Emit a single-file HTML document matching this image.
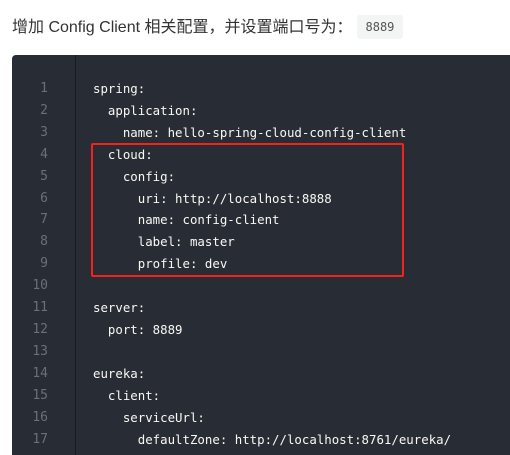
<!DOCTYPE html>
<html><head><meta charset="utf-8"><style>
body{margin:0;width:510px;height:450px;overflow:hidden;background:#fff;position:relative;font-family:"Liberation Sans","Noto Sans CJK SC",sans-serif}
.t{position:absolute;left:12px;top:15px;font-size:16px;color:#333;line-height:22px;white-space:nowrap}
.c{display:inline-block;background:#f3f4f4;border-radius:3px;font-family:"DejaVu Sans Mono",monospace;font-size:12px;color:#555;padding:2px 9px;margin-left:4px;line-height:20px;vertical-align:1px}
.b{position:absolute;left:12px;top:55px;width:510px;height:400px;background:#282c34;border-radius:4px 0 0 0}
.g{position:absolute;left:75px;top:55px;width:1px;height:400px;background:#17191d}
.n,.k{position:absolute;top:78px;font-family:"DejaVu Sans Mono",monospace;font-size:12.4px;line-height:21.9px;white-space:pre}
.n{left:20px;width:28px;text-align:right;color:#6b7078;font-size:13px}
.k{left:93px;color:#f8f8f4}
.r{position:absolute;left:91px;top:143px;width:309px;height:130px;border:2px solid #f2231c;border-radius:2px}
</style></head><body>
<div class="t">增加 Config Client 相关配置，并设置端口号为：<span class="c">8889</span></div>
<div class="b"></div><div class="g"></div>
<div class="n">1
2
3
4
5
6
7
8
9
10
11
12
13
14
15
16
17</div>
<div class="k">spring:
  application:
    name: hello-spring-cloud-config-client
  cloud:
    config:
      uri: http://localhost:8888
      name: config-client
      label: master
      profile: dev

server:
  port: 8889

eureka:
  client:
    serviceUrl:
      defaultZone: http://localhost:8761/eureka/</div>
<div class="r"></div>
</body></html>
